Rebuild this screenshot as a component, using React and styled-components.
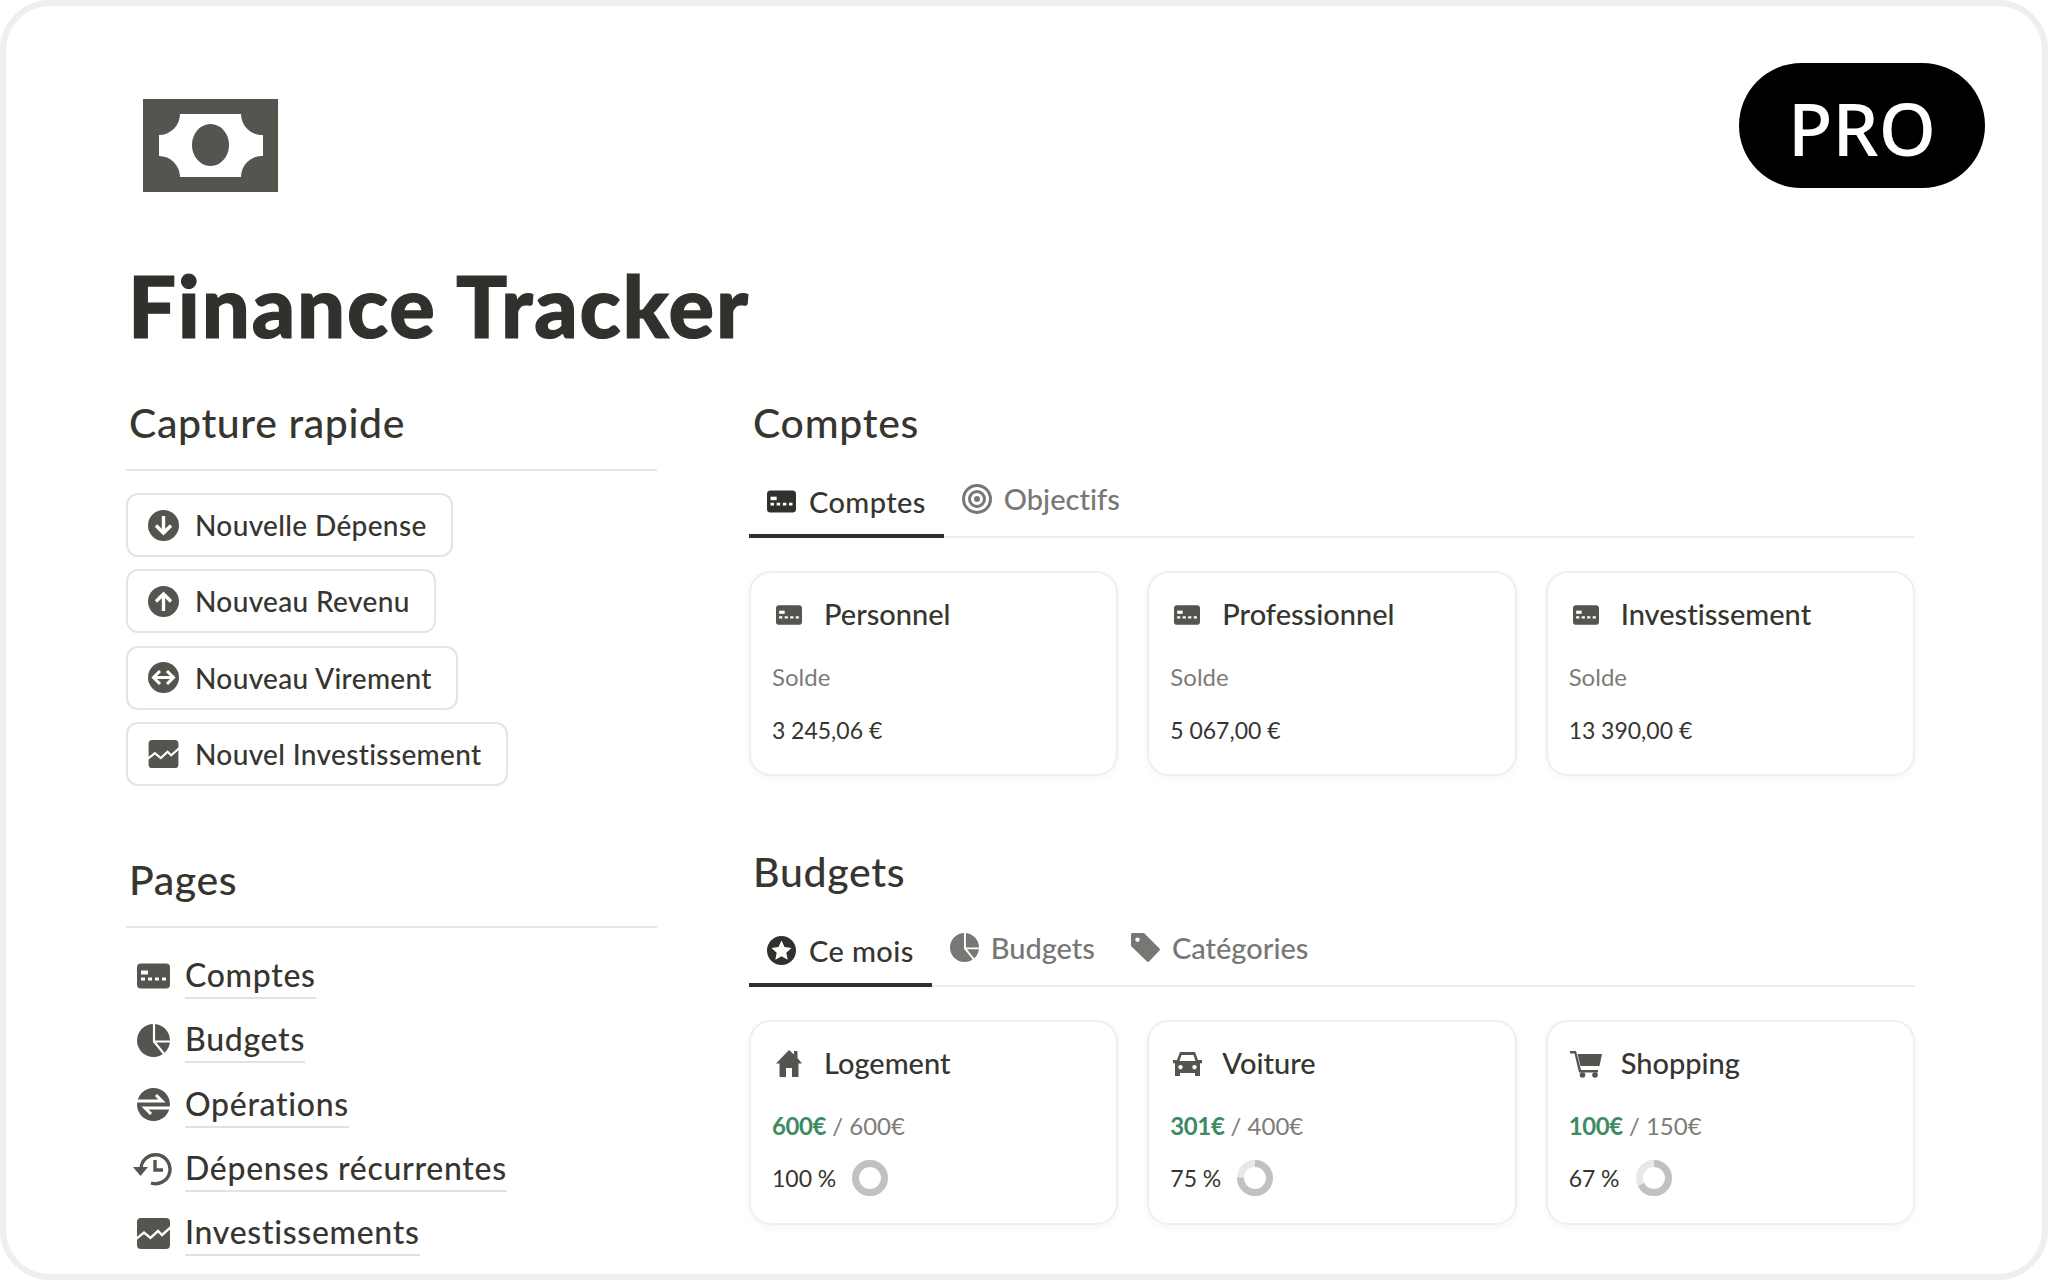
import React from "react";
import styled, { createGlobalStyle } from "styled-components";

const GlobalStyle = createGlobalStyle`
  html, body {
    margin: 0;
    padding: 0;
    background: #fff;
  }
  body {
    font-family: Lato, "Noto Sans", sans-serif;
    font-variant-ligatures: none;
    color: #37352f;
  }
`;

const Frame = styled.div`
  position: relative;
  box-sizing: border-box;
  width: 2048px;
  height: 1280px;
  overflow: hidden;
  border: 6px solid #efefef;
  border-radius: 50px;
  padding: 93px 127px 0 120px;
  background: #fff;
`;

const ProBadge = styled.div`
  position: absolute;
  top: 57px;
  right: 57px;
  width: 246px;
  height: 125px;
  border-radius: 63px;
  background: #000;
  color: #fff;
  font-family: "Noto Sans", sans-serif;
  font-size: 73px;
  font-weight: 500;
  line-height: 130px;
  text-align: center;
`;

const Logo = styled.svg`
  display: block;
  width: 135px;
  height: 93px;
  margin-left: 17px;
`;

const Title = styled.h1`
  margin: 0 0 0 2px;
  height: 100px;
  padding-top: 63px;
  font-size: 85px;
  font-weight: 900;
  letter-spacing: 1.8px;
  line-height: 100px;
  -webkit-text-stroke: 1.2px #32302c;
  color: #32302c;
`;

const Columns = styled.div`
  display: grid;
  grid-template-columns: 531px 1fr;
  column-gap: 92px;
  margin-top: 40px;
`;

const Column = styled.div`
  display: flex;
  flex-direction: column;
`;

const SideHeading = styled.h2`
  margin: ${(p) => (p.$spaced ? "66px" : "0")} 0 22px;
  padding: 0 0 18px 3px;
  height: 56px;
  border-bottom: 2px solid #e6e6e4;
  font-size: 41px;
  font-weight: 500;
  letter-spacing: 0.6px;
  line-height: 56px;
  color: #37352f;
`;

const MainHeading = styled.h2`
  margin: ${(p) => (p.$spaced ? "68px" : "0")} 0 21px 4px;
  font-size: 41px;
  font-weight: 500;
  letter-spacing: 0.7px;
  line-height: 56px;
  color: #37352f;
`;

const ButtonStack = styled.div`
  display: flex;
  flex-direction: column;
  align-items: flex-start;
  gap: 12.4px;
`;

const QuickButton = styled.div`
  box-sizing: border-box;
  display: flex;
  align-items: center;
  gap: 16px;
  height: 64px;
  padding: 0 24px 0 20px;
  border: 2px solid #e4e4e2;
  border-radius: 12px;
  font-size: 28px;
  font-weight: 500;
  letter-spacing: 0.35px;
  color: #37352f;
`;

const PageList = styled.div`
  display: flex;
  flex-direction: column;
  gap: 14.3px;
  margin-top: 1px;
`;

const PageRow = styled.div`
  display: flex;
  align-items: center;
  height: 50px;
`;

const PageIconSlot = styled.span`
  display: flex;
  justify-content: center;
  width: 55px;
  margin-right: 4px;
`;

const PageLink = styled.span`
  font-size: 32px;
  font-weight: 500;
  letter-spacing: 0.7px;
  line-height: 44px;
  border-bottom: 2px solid #e2e2e0;
  color: #37352f;
`;

const TabBar = styled.div`
  display: flex;
  align-items: flex-end;
  height: 64px;
  border-bottom: 2px solid #ededeb;
`;

const Tab = styled.div`
  box-sizing: border-box;
  display: flex;
  align-items: center;
  gap: ${(p) => (p.$active ? "13px" : "12px")};
  height: ${(p) => (p.$active ? "66px" : "64px")};
  margin-bottom: ${(p) => (p.$active ? "-2px" : "0")};
  padding: 0 18px ${(p) => (p.$active ? "3px" : "11px")};
  border-bottom: ${(p) => (p.$active ? "4px solid #32302c" : "0")};
  font-size: 29px;
  font-weight: 500;
  letter-spacing: ${(p) => (p.$active ? "0.4px" : "0")};
  color: ${(p) => (p.$active ? "#37352f" : "#787774")};
`;

const CardGrid = styled.div`
  display: grid;
  grid-template-columns: repeat(3, 1fr);
  gap: 29px;
  margin-top: 33px;
`;

const Card = styled.div`
  box-sizing: border-box;
  height: 205px;
  padding: 20px 21px 0;
  border: 2px solid #efefed;
  border-radius: 22px;
  background: #fff;
  box-shadow: 0 2px 6px rgba(55, 53, 47, 0.05);
`;

const CardTitle = styled.div`
  display: flex;
  align-items: center;
  height: 40px;
  font-size: 29px;
  font-weight: 500;
  color: #37352f;
`;

const CardIconSlot = styled.span`
  display: flex;
  justify-content: center;
  width: 34px;
  margin-right: 18px;
  padding-top: 3px;
`;

const Muted = styled.div`
  margin-top: 28px;
  font-size: 24px;
  line-height: 32px;
  color: #7d7c78;
`;

const Amount = styled.div`
  margin-top: 21px;
  font-size: 23px;
  letter-spacing: -0.9px;
  line-height: 32px;
  color: #37352f;
`;

const Spent = styled.span`
  font-weight: 700;
  letter-spacing: -0.4px;
  color: #3e8a62;
`;

const ProgressRow = styled.div`
  display: flex;
  align-items: center;
  gap: 16px;
  margin-top: 18px;
  font-size: 23px;
  letter-spacing: -0.8px;
  line-height: 36px;
  color: #37352f;
`;

const Ring = ({ value }) => {
  const r = 14.5;
  const c = 2 * Math.PI * r;
  return (
    <svg width="36" height="36" viewBox="0 0 36 36">
      <circle cx="18" cy="18" r={r} fill="none" stroke="#e8e8e6" strokeWidth="7" />
      <circle
        cx="18"
        cy="18"
        r={r}
        fill="none"
        stroke="#c1c1bd"
        strokeWidth="7"
        strokeDasharray={`${(c * value) / 100} ${c}`}
        transform="rotate(-90 18 18)"
      />
    </svg>
  );
};

const INK = "#55544e";

const CardIcon = ({ w = 33, h = 25, color = INK }) => (
  <svg width={w} height={h} viewBox="0 0 33 25">
    <rect width="33" height="25" rx="4" fill={color} />
    <rect x="4" y="7" width="7" height="4" fill="#fff" />
    <path d="M4 15.500h4M11 15.500h4M18 15.500h4M25 15.500h4" stroke="#fff" strokeWidth="3" />
  </svg>
);

const ChartIcon = ({ w = 33, h = 31 }) => (
  <svg width={w} height={h} viewBox="0 0 33 31">
    <rect width="33" height="31" rx="4" fill={INK} />
    <path d="M-1 21 7 14.500 13.500 20 21 13 25 17 34 9" fill="none" stroke="#fff" strokeWidth="2.4" />
  </svg>
);

const DownIcon = () => (
  <svg width="31" height="31" viewBox="0 0 31 31">
    <circle cx="15.500" cy="15.500" r="15.500" fill={INK} />
    <path d="M15.500 6v17M8 15.500l7.500 7.500 7.500-7.500" fill="none" stroke="#fff" strokeWidth="3.4" />
  </svg>
);

const UpIcon = () => (
  <svg width="31" height="31" viewBox="0 0 31 31">
    <circle cx="15.500" cy="15.500" r="15.500" fill={INK} />
    <path d="M15.500 25V8M8 15.500L15.500 8l7.500 7.500" fill="none" stroke="#fff" strokeWidth="3.4" />
  </svg>
);

const SwapIcon = () => (
  <svg width="31" height="31" viewBox="0 0 31 31">
    <circle cx="15.500" cy="15.500" r="15.500" fill={INK} />
    <path d="M6 15.500h19M12 9l-6.500 6.500L12 22M19 9l6.500 6.500L19 22" fill="none" stroke="#fff" strokeWidth="3" />
  </svg>
);

const PieIcon = ({ size = 33, color = INK }) => (
  <svg width={size} height={size} viewBox="0 0 33 33">
    <circle cx="16.500" cy="16.500" r="16.500" fill={color} />
    <path d="M17 -1V17.500H34M17 17.500 28 31" fill="none" stroke="#fff" strokeWidth="2.2" />
  </svg>
);

const FlowIcon = () => (
  <svg width="33" height="33" viewBox="0 0 33 33">
    <circle cx="16.500" cy="16.500" r="16.500" fill={INK} />
    <path d="M-1 13H25L19 7M34 20H8L14 26" fill="none" stroke="#fff" strokeWidth="3" />
  </svg>
);

const HistoryIcon = () => (
  <svg width="41" height="34" viewBox="0 0 41 34">
    <path d="M8 17A14.500 14.500 0 1 1 18 31" fill="none" stroke={INK} strokeWidth="3.4" />
    <path d="M0 15H15L7.500 24Z" fill={INK} />
    <path d="M22 8V18H30" fill="none" stroke={INK} strokeWidth="3.4" />
  </svg>
);

const TargetIcon = () => (
  <svg width="30" height="30" viewBox="0 0 30 30">
    <g fill="none" stroke="#787774" strokeWidth="3">
      <circle cx="15" cy="15" r="13.500" />
      <circle cx="15" cy="15" r="7.500" />
    </g>
    <circle cx="15" cy="15" r="3" fill="#787774" />
  </svg>
);

const StarIcon = () => (
  <svg width="29" height="29" viewBox="0 0 29 29">
    <circle cx="14.500" cy="14.500" r="14.500" fill="#32302c" />
    <path d="M14.500 4.500l3 6.600 7 .8-5.200 4.800 1.400 7-6.200-3.500-6.200 3.500 1.400-7-5.200-4.800 7-.8z" fill="#fff" />
  </svg>
);

const TagIcon = () => (
  <svg width="29" height="29" viewBox="0 0 29 29">
    <path
      fillRule="evenodd"
      d="M0 1.500A1.500 1.500 0 0 1 1.500 0H13l15.500 15.500a1.500 1.500 0 0 1 0 2L18 28.500a1.500 1.500 0 0 1-2 0L0 13ZM6.500 4.500a2.200 2.200 0 1 0 .01 0Z"
      fill="#787774"
    />
  </svg>
);

const HouseIcon = () => (
  <svg width="26" height="27" viewBox="0 0 26 27">
    <path d="M13 0 18 4.500V1H21.500V8L26 13.500H22.500V27H16V18H10V27H3.500V13.500H0Z" fill={INK} />
  </svg>
);

const CarIcon = () => (
  <svg width="29" height="24" viewBox="0 0 29 24">
    <path
      fillRule="evenodd"
      d="M7 0H22L25 8H29V11L27 11.500V24H22V21H7V24H2V11.500L0 11V8H4ZM8.500 3 6.500 9H22.500L20.500 3ZM7.500 13a2.200 2.200 0 1 0 .01 0ZM21.500 13a2.200 2.200 0 1 0 .01 0Z"
      fill={INK}
    />
  </svg>
);

const CartIcon = () => (
  <svg width="32" height="28" viewBox="0 0 32 28">
    <path d="M0 1H6L11 20H28V22.500H9L4.500 3.500H0Z" fill={INK} />
    <path d="M7.500 4H32L29.500 16H10.500Z" fill={INK} />
    <circle cx="12.500" cy="25" r="2.800" fill={INK} />
    <circle cx="25" cy="25" r="2.800" fill={INK} />
  </svg>
);

const quickActions = [
  { label: "Nouvelle Dépense", icon: <DownIcon /> },
  { label: "Nouveau Revenu", icon: <UpIcon /> },
  { label: "Nouveau Virement", icon: <SwapIcon /> },
  { label: "Nouvel Investissement", icon: <ChartIcon w={31} h={28} /> },
];

const pages = [
  { label: "Comptes", icon: <CardIcon h={26} /> },
  { label: "Budgets", icon: <PieIcon /> },
  { label: "Opérations", icon: <FlowIcon /> },
  { label: "Dépenses récurrentes", icon: <HistoryIcon /> },
  { label: "Investissements", icon: <ChartIcon /> },
];

const accounts = [
  { name: "Personnel", amount: "3\u202f245,06 €" },
  { name: "Professionnel", amount: "5\u202f067,00 €" },
  { name: "Investissement", amount: "13\u202f390,00 €" },
];

const budgets = [
  { name: "Logement", icon: <HouseIcon />, spent: "600€", total: "600€", pct: 100 },
  { name: "Voiture", icon: <CarIcon />, spent: "301€", total: "400€", pct: 75 },
  { name: "Shopping", icon: <CartIcon />, spent: "100€", total: "150€", pct: 67 },
];

export default function App() {
  return (
    <>
      <GlobalStyle />
      <Frame>
        <ProBadge>PRO</ProBadge>
        <Logo viewBox="0 0 135 93">
          <rect width="135" height="93" fill={INK} />
          <path
            fillRule="evenodd"
            d="M37 15H98A21 21 0 0 0 120 36V57A21 21 0 0 0 98 78H37A21 21 0 0 0 16 57V36A21 21 0 0 0 37 15ZM67.500 25a18.500 21 0 1 0 .01 0Z"
            fill="#fff"
          />
        </Logo>
        <Title>Finance Tracker</Title>
        <Columns>
          <Column>
            <SideHeading>Capture rapide</SideHeading>
            <ButtonStack>
              {quickActions.map((a) => (
                <QuickButton key={a.label}>
                  {a.icon}
                  <span>{a.label}</span>
                </QuickButton>
              ))}
            </ButtonStack>
            <SideHeading $spaced>Pages</SideHeading>
            <PageList>
              {pages.map((p) => (
                <PageRow key={p.label}>
                  <PageIconSlot>{p.icon}</PageIconSlot>
                  <PageLink>{p.label}</PageLink>
                </PageRow>
              ))}
            </PageList>
          </Column>
          <Column>
            <MainHeading>Comptes</MainHeading>
            <TabBar>
              <Tab $active>
                <CardIcon w={29} h={23} color="#32302c" />
                Comptes
              </Tab>
              <Tab>
                <TargetIcon />
                Objectifs
              </Tab>
            </TabBar>
            <CardGrid>
              {accounts.map((a) => (
                <Card key={a.name}>
                  <CardTitle>
                    <CardIconSlot>
                      <CardIcon w={26} h={20} />
                    </CardIconSlot>
                    {a.name}
                  </CardTitle>
                  <Muted>Solde</Muted>
                  <Amount>{a.amount}</Amount>
                </Card>
              ))}
            </CardGrid>
            <MainHeading $spaced>Budgets</MainHeading>
            <TabBar>
              <Tab $active>
                <StarIcon />
                Ce mois
              </Tab>
              <Tab>
                <PieIcon size={29} color="#787774" />
                Budgets
              </Tab>
              <Tab>
                <TagIcon />
                Catégories
              </Tab>
            </TabBar>
            <CardGrid>
              {budgets.map((b) => (
                <Card key={b.name}>
                  <CardTitle>
                    <CardIconSlot>{b.icon}</CardIconSlot>
                    {b.name}
                  </CardTitle>
                  <Muted>
                    <Spent>{b.spent}</Spent> / {b.total}
                  </Muted>
                  <ProgressRow>
                    <span>{b.pct}{"\u202f"}%</span>
                    <Ring value={b.pct} />
                  </ProgressRow>
                </Card>
              ))}
            </CardGrid>
          </Column>
        </Columns>
      </Frame>
    </>
  );
}
